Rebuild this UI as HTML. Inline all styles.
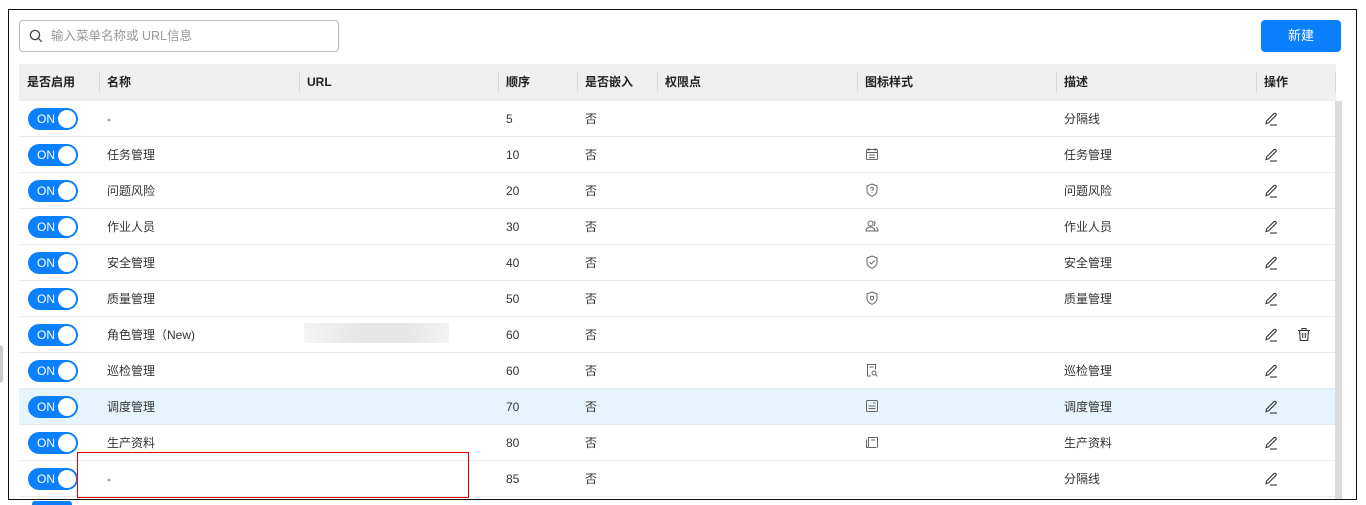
<!DOCTYPE html>
<html><head><meta charset="utf-8"><style>
*{box-sizing:border-box;margin:0;padding:0}
body{width:1366px;height:504px;background:#fff;font-family:"Liberation Sans","Noto Sans CJK SC",sans-serif;font-size:12px;color:#333;position:relative;overflow:hidden}
.box{position:absolute;left:8px;top:9px;width:1349px;height:491px;border:1px solid #111;overflow:hidden;background:#fff}
.search{position:absolute;left:10px;top:10px;width:320px;height:32px;border:1px solid #bbb;border-radius:4px;color:#999;font-size:12.5px;line-height:30px;padding-left:31px}
.search svg{position:absolute;left:9px;top:8px}
.btn{position:absolute;left:1252px;top:10px;width:80px;height:32px;background:#0a80ff;border-radius:4px;color:#fff;text-align:center;line-height:32px;font-size:13px}
.hdr{position:absolute;left:10px;top:54px;width:1317px;height:37px;background:#f0f0f0;font-weight:bold;color:#222}
.c{position:absolute;top:0;height:36px;line-height:36px;padding-left:8px;white-space:nowrap}
.sep{position:absolute;top:8px;width:1px;height:20px;background:#d8d8d8}
.row{position:absolute;left:10px;width:1316px;height:36px;border-bottom:1px solid #ebebeb}
.tg{position:absolute;left:9px;top:7px;width:50px;height:22px;border-radius:11px;background:#0a80ff;color:#fff;font-size:12px;line-height:22px;padding-left:9px}
.tg:after{content:"";position:absolute;right:2px;top:2px;width:18px;height:18px;border-radius:50%;background:#fff}
.ic{position:absolute;top:10px}
.sb{position:absolute;left:1326px;top:91px;width:7px;height:410px;background:#dcdcdc}
.pen{position:absolute;left:1245px;top:11px}
</style></head><body>
<div style="position:absolute;left:0;top:345px;width:3px;height:38px;background:#ccc;border-radius:0 3px 3px 0"></div>
<div class="box">
<div class="search"><svg width="14" height="14" viewBox="0 0 14 14"><circle cx="6" cy="6" r="4.6" fill="none" stroke="#444" stroke-width="1.3"/><path d="M9.4 9.4L12.8 12.8" stroke="#444" stroke-width="1.3"/></svg>输入菜单名称或 URL信息</div>
<div class="btn">新建</div>
<div class="hdr">
<div class="c" style="left:0">是否启用</div><div class="sep" style="left:80px"></div>
<div class="c" style="left:80px">名称</div><div class="sep" style="left:280px"></div>
<div class="c" style="left:280px">URL</div><div class="sep" style="left:479px"></div>
<div class="c" style="left:479px">顺序</div><div class="sep" style="left:558px"></div>
<div class="c" style="left:558px">是否嵌入</div><div class="sep" style="left:638px"></div>
<div class="c" style="left:638px">权限点</div><div class="sep" style="left:838px"></div>
<div class="c" style="left:838px">图标样式</div><div class="sep" style="left:1037px"></div>
<div class="c" style="left:1037px">描述</div><div class="sep" style="left:1237px"></div>
<div class="c" style="left:1237px">操作</div><div class="sep" style="left:1316px"></div>
</div>
<div class="sb"></div>

<div class="row" style="top:91px"><div class="tg">ON</div><div class="c" style="left:80px">-</div><div class="c" style="left:479px">5</div><div class="c" style="left:558px">否</div><div class="c" style="left:1037px">分隔线</div><svg class="pen" width="14" height="14" viewBox="0 0 14 14"><path d="M2 11.5L2.6 9L9.8 1.8a1.3 1.3 0 0 1 1.9 1.9L4.5 10.9Z" fill="none" stroke="#333" stroke-width="1.1"/><path d="M6 13H13" stroke="#333" stroke-width="1.1"/></svg></div>
<div class="row" style="top:127px"><div class="tg">ON</div><div class="c" style="left:80px">任务管理</div><div class="c" style="left:479px">10</div><div class="c" style="left:558px">否</div><svg class="ic" style="left:846px" width="14" height="14" viewBox="0 0 14 14" fill="none" stroke="#666"><rect x="1.5" y="2.5" width="11" height="10" rx="1"/><path d="M4 1v3M10 1v3M1.5 5.5h11M4 8h6M4 10.5h6"/></svg><div class="c" style="left:1037px">任务管理</div><svg class="pen" width="14" height="14" viewBox="0 0 14 14"><path d="M2 11.5L2.6 9L9.8 1.8a1.3 1.3 0 0 1 1.9 1.9L4.5 10.9Z" fill="none" stroke="#333" stroke-width="1.1"/><path d="M6 13H13" stroke="#333" stroke-width="1.1"/></svg></div>
<div class="row" style="top:163px"><div class="tg">ON</div><div class="c" style="left:80px">问题风险</div><div class="c" style="left:479px">20</div><div class="c" style="left:558px">否</div><svg class="ic" style="left:846px" width="14" height="14" viewBox="0 0 14 14" fill="none" stroke="#666"><path d="M7 1L12 3v4.5c0 3-2.5 4.8-5 5.8C4.5 12.3 2 10.5 2 7.5V3Z"/><path d="M5.6 5.5a1.4 1.4 0 1 1 2 1.3c-.5.3-.6.6-.6 1.2M7 9.6v.5"/></svg><div class="c" style="left:1037px">问题风险</div><svg class="pen" width="14" height="14" viewBox="0 0 14 14"><path d="M2 11.5L2.6 9L9.8 1.8a1.3 1.3 0 0 1 1.9 1.9L4.5 10.9Z" fill="none" stroke="#333" stroke-width="1.1"/><path d="M6 13H13" stroke="#333" stroke-width="1.1"/></svg></div>
<div class="row" style="top:199px"><div class="tg">ON</div><div class="c" style="left:80px">作业人员</div><div class="c" style="left:479px">30</div><div class="c" style="left:558px">否</div><svg class="ic" style="left:846px" width="14" height="14" viewBox="0 0 14 14" fill="none" stroke="#666"><circle cx="5.5" cy="4.5" r="2.5"/><path d="M1 12c0-2.5 2-4 4.5-4S10 9.5 10 12ZM8.5 2.2a2.5 2.5 0 0 1 0 4.6M11 8.5c1.2.7 2 1.8 2 3.5h-3"/></svg><div class="c" style="left:1037px">作业人员</div><svg class="pen" width="14" height="14" viewBox="0 0 14 14"><path d="M2 11.5L2.6 9L9.8 1.8a1.3 1.3 0 0 1 1.9 1.9L4.5 10.9Z" fill="none" stroke="#333" stroke-width="1.1"/><path d="M6 13H13" stroke="#333" stroke-width="1.1"/></svg></div>
<div class="row" style="top:235px"><div class="tg">ON</div><div class="c" style="left:80px">安全管理</div><div class="c" style="left:479px">40</div><div class="c" style="left:558px">否</div><svg class="ic" style="left:846px" width="14" height="14" viewBox="0 0 14 14" fill="none" stroke="#666"><path d="M7 1L12 3v4.5c0 3-2.5 4.8-5 5.8C4.5 12.3 2 10.5 2 7.5V3Z"/><path d="M4.6 7l1.8 1.8L9.6 5.6"/></svg><div class="c" style="left:1037px">安全管理</div><svg class="pen" width="14" height="14" viewBox="0 0 14 14"><path d="M2 11.5L2.6 9L9.8 1.8a1.3 1.3 0 0 1 1.9 1.9L4.5 10.9Z" fill="none" stroke="#333" stroke-width="1.1"/><path d="M6 13H13" stroke="#333" stroke-width="1.1"/></svg></div>
<div class="row" style="top:271px"><div class="tg">ON</div><div class="c" style="left:80px">质量管理</div><div class="c" style="left:479px">50</div><div class="c" style="left:558px">否</div><svg class="ic" style="left:846px" width="14" height="14" viewBox="0 0 14 14" fill="none" stroke="#666"><path d="M7 1L12 3v4.5c0 3-2.5 4.8-5 5.8C4.5 12.3 2 10.5 2 7.5V3Z"/><rect x="5.5" y="5.3" width="3" height="3.6" rx="1.4"/></svg><div class="c" style="left:1037px">质量管理</div><svg class="pen" width="14" height="14" viewBox="0 0 14 14"><path d="M2 11.5L2.6 9L9.8 1.8a1.3 1.3 0 0 1 1.9 1.9L4.5 10.9Z" fill="none" stroke="#333" stroke-width="1.1"/><path d="M6 13H13" stroke="#333" stroke-width="1.1"/></svg></div>
<div class="row" style="top:307px"><div class="tg">ON</div><div class="c" style="left:80px">角色管理（New)</div><div style="position:absolute;left:285px;top:6px;width:145px;height:20px;background:linear-gradient(90deg,#f4f4f4,#e6e6e6 40%,#e6e6e6 70%,#f4f4f4)"></div><div class="c" style="left:479px">60</div><div class="c" style="left:558px">否</div><svg class="pen" width="14" height="14" viewBox="0 0 14 14"><path d="M2 11.5L2.6 9L9.8 1.8a1.3 1.3 0 0 1 1.9 1.9L4.5 10.9Z" fill="none" stroke="#333" stroke-width="1.1"/><path d="M6 13H13" stroke="#333" stroke-width="1.1"/></svg><svg style="position:absolute;left:1278px;top:10px" width="14" height="15" viewBox="0 0 14 15" fill="none" stroke="#333" stroke-width="1.1"><path d="M1 3.5h12M5 3.5V1.5h4v2M2.5 3.5l.8 10h7.4l.8-10M5.7 6v5M8.3 6v5"/></svg></div>
<div class="row" style="top:343px"><div class="tg">ON</div><div class="c" style="left:80px">巡检管理</div><div class="c" style="left:479px">60</div><div class="c" style="left:558px">否</div><svg class="ic" style="left:846px" width="14" height="14" viewBox="0 0 14 14" fill="none" stroke="#666"><path d="M6 13H2.5V1.5h8v5"/><path d="M4.5 4h4"/><circle cx="9" cy="10" r="2"/><path d="M10.5 11.5l1.8 1.8"/></svg><div class="c" style="left:1037px">巡检管理</div><svg class="pen" width="14" height="14" viewBox="0 0 14 14"><path d="M2 11.5L2.6 9L9.8 1.8a1.3 1.3 0 0 1 1.9 1.9L4.5 10.9Z" fill="none" stroke="#333" stroke-width="1.1"/><path d="M6 13H13" stroke="#333" stroke-width="1.1"/></svg></div>
<div class="row" style="top:379px;background:#e6f5fd"><div class="tg">ON</div><div class="c" style="left:80px">调度管理</div><div class="c" style="left:479px">70</div><div class="c" style="left:558px">否</div><svg class="ic" style="left:846px" width="14" height="14" viewBox="0 0 14 14" fill="none" stroke="#666"><rect x="1.5" y="1.5" width="11" height="11" rx="1"/><path d="M8 4h2.5M3.5 7h7M3.5 9.5h7"/></svg><div class="c" style="left:1037px">调度管理</div><svg class="pen" width="14" height="14" viewBox="0 0 14 14"><path d="M2 11.5L2.6 9L9.8 1.8a1.3 1.3 0 0 1 1.9 1.9L4.5 10.9Z" fill="none" stroke="#333" stroke-width="1.1"/><path d="M6 13H13" stroke="#333" stroke-width="1.1"/></svg></div>
<div class="row" style="top:415px"><div class="tg">ON</div><div class="c" style="left:80px">生产资料</div><div class="c" style="left:479px">80</div><div class="c" style="left:558px">否</div><svg class="ic" style="left:846px" width="14" height="14" viewBox="0 0 14 14" fill="none" stroke="#666"><path d="M1.5 4.5v8h10M3.5 12.5V2.5h9v10"/><path d="M6 5h4"/></svg><div class="c" style="left:1037px">生产资料</div><svg class="pen" width="14" height="14" viewBox="0 0 14 14"><path d="M2 11.5L2.6 9L9.8 1.8a1.3 1.3 0 0 1 1.9 1.9L4.5 10.9Z" fill="none" stroke="#333" stroke-width="1.1"/><path d="M6 13H13" stroke="#333" stroke-width="1.1"/></svg></div>
<div class="row" style="top:451px"><div class="tg">ON</div><div class="c" style="left:80px">-</div><div class="c" style="left:479px">85</div><div class="c" style="left:558px">否</div><div class="c" style="left:1037px">分隔线</div><svg class="pen" width="14" height="14" viewBox="0 0 14 14"><path d="M2 11.5L2.6 9L9.8 1.8a1.3 1.3 0 0 1 1.9 1.9L4.5 10.9Z" fill="none" stroke="#333" stroke-width="1.1"/><path d="M6 13H13" stroke="#333" stroke-width="1.1"/></svg></div>
<div style="position:absolute;left:68px;top:442px;width:392px;height:46px;border:1px solid #e00000"></div>
</div>
<div style="position:absolute;left:32px;top:501px;width:40px;height:4px;background:#0a80ff;border-radius:3px 3px 0 0"></div>
</body></html>
